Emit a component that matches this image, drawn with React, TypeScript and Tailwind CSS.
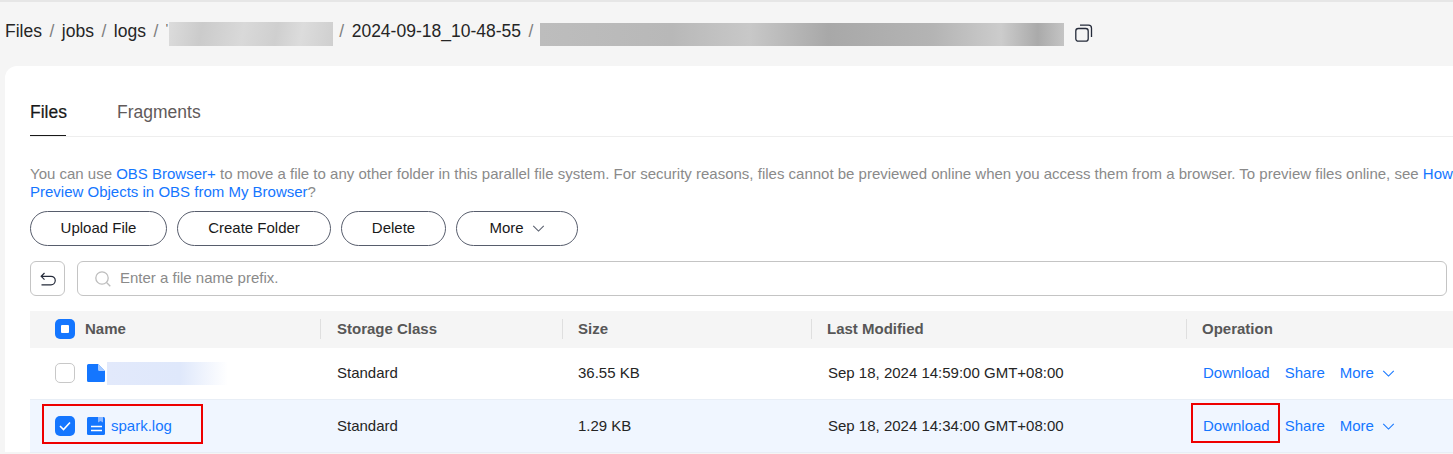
import type { ReactNode } from "react";

const font = "font-['Liberation_Sans',Arial,sans-serif]";

function Chevron({ className }: { className: string }) {
    return (
        <svg viewBox="0 0 14 8" fill="none" stroke="currentColor" strokeWidth="1.2" className={className}>
            <path d="M1 1l6 6 6-6" />
        </svg>
    );
}

function Pill({ width, children }: { width: string; children: ReactNode }) {
    return (
        <button className={`h-[35px] ${width} flex items-center justify-center gap-[8px] rounded-full border border-[#575d6c] bg-white text-[15px] text-[#191919]`}>
            {children}
        </button>
    );
}

function Sep({ className = "" }: { className?: string }) {
    return <span className={`text-[#7f7f7f] ${className}`}>/</span>;
}

function HeaderCell({ children }: { children: ReactNode }) {
    return (
        <div className="-ml-[1px] flex h-[20px] items-center border-l border-[#dfdfdf] pl-[15px] text-[15px] font-bold text-[#575757]">
            {children}
        </div>
    );
}

function Actions() {
    return (
        <div className="flex items-center text-[15px] text-[#1476ff]">
            <span>Download</span>
            <span className="ml-[15px]">Share</span>
            <span className="ml-[15px]">More</span>
            <Chevron className="ml-[8px] h-[7px] w-[13px]" />
        </div>
    );
}

export default function App() {
    return (
        <div className={`${font} h-[454px] w-full overflow-hidden border-t-2 border-[#e6e6e6] bg-[#f5f5f5]`}>
            <div className="flex h-[64px] items-center gap-[7.5px] pb-[6px] pl-[5px] text-[17.5px] text-[#252525]">
                <span>Files</span>
                <Sep />
                <span>jobs</span>
                <Sep />
                <span>logs</span>
                <Sep />
                <div className="mt-[6px] flex items-start">
                    <span className="mt-[1px] w-[3px] text-xs leading-none text-[#555555]">'</span>
                    <div className="h-[24px] w-[164px] bg-[linear-gradient(100deg,#dcdcdc,#cbcbcb_20%,#d9d9d9_45%,#cfcfcf_65%,#dcdcdc_80%,#cfcfcf)]" />
                </div>
                <Sep className="-ml-[1px]" />
                <span>2024-09-18_10-48-55</span>
                <Sep />
                <div className="-ml-[1px] mt-[6px] h-[23px] w-[524px] bg-[linear-gradient(90deg,#bdbdbd,#b8b8b8_25%,#c8c8c8_40%,#a8a8a8_55%,#b4b4b4_75%,#cccccc_88%,#aaaaaa_95%,#c4c4c4)]" />
                <svg viewBox="0 0 18 18" fill="none" stroke="#252b3a" strokeWidth="1.3" className="ml-[3.5px] mt-[4px] h-[18px] w-[18px]">
                    <rect x="0.8" y="4.5" width="12.4" height="12.7" rx="2.5" />
                    <path d="M5 1.2h8.5a3 3 0 0 1 3 3V13" />
                </svg>
            </div>

            <div className="relative ml-[5px] h-[386px] rounded-tl-xl bg-white pl-[25px]">
                <div className="flex h-[71px] items-end border-b border-[#eeeeee] text-[17.5px]">
                    <div className="w-[36px] border-b-[1.5px] border-[#191919] pb-[13px] leading-[20px] text-[#191919] [-webkit-text-stroke:0.2px]">Files</div>
                    <div className="ml-[51px] pb-[14px] leading-[20px] text-[#615a5a]">Fragments</div>
                </div>

                <p className="mt-[28px] w-[1423px] text-[15px] leading-[18px] text-[#8a8a8a]">
                    You can use <span className="text-[#1476ff]">OBS Browser+</span> to move a file to any other folder in this parallel file system. For security reasons, files cannot be previewed online when you access them from a browser. To preview files online, see <span className="text-[#1476ff]">How Preview Objects in OBS from My Browser</span>?
                </p>

                <div className="mt-[10px] flex gap-[10px]">
                    <Pill width="w-[137px]">Upload File</Pill>
                    <Pill width="w-[154px]">Create Folder</Pill>
                    <Pill width="w-[105px]">Delete</Pill>
                    <Pill width="w-[122px]">
                        More
                        <Chevron className="h-[7px] w-[13px] text-[#575d6c]" />
                    </Pill>
                </div>

                <div className="mr-[6px] mt-[15px] flex gap-[12px]">
                    <button className="flex h-[35px] w-[35px] items-center justify-center rounded-md border border-[#c4c4c4]">
                        <svg viewBox="0 0 16 14" fill="none" stroke="#252b3a" strokeWidth="1.2" className="h-[14px] w-[16px]">
                            <path d="M4.5 1L1.2 4.3 4.5 7.6M1.2 4.3H11a4 4 0 0 1 0 8.5H1.5" />
                        </svg>
                    </button>
                    <div className="flex h-[35px] flex-1 items-center rounded-md border border-[#c4c4c4] pl-[17px] text-[15px] text-[#8a8a8a]">
                        <svg viewBox="0 0 16 16" fill="none" stroke="#bdbdbd" strokeWidth="1.3" className="mr-[9px] h-[16px] w-[16px]">
                            <circle cx="7" cy="7" r="6.2" />
                            <path d="M11.5 11.5L15.3 15.3" />
                        </svg>
                        Enter a file name prefix.
                    </div>
                </div>

                <div className="mt-[15px] text-[15px] text-[#252525]">
                    <div className="grid h-[37px] grid-cols-[291px_242px_249px_375px_1fr] items-center bg-[#f5f5f5] pb-[1px]">
                        <div className="flex items-center pl-[25px]">
                            <span className="flex h-[20px] w-[20px] items-center justify-center rounded-[5px] bg-[#1476ff]">
                                <span className="h-[8px] w-[8px] rounded-[1px] bg-white" />
                            </span>
                            <span className="ml-[10px] text-[15px] font-bold text-[#575757]">Name</span>
                        </div>
                        <HeaderCell><span className="pl-[1px]">Storage Class</span></HeaderCell>
                        <HeaderCell>Size</HeaderCell>
                        <HeaderCell>Last Modified</HeaderCell>
                        <HeaderCell>Operation</HeaderCell>
                    </div>

                    <div className="grid h-[52px] grid-cols-[291px_242px_249px_375px_1fr] items-center border-b border-[#e8eef6] bg-white pb-[1px]">
                        <div className="flex items-center pl-[25px]">
                            <span className="h-[20px] w-[20px] rounded-[5px] border-[1.5px] border-[#c8c8c8] bg-white" />
                            <svg viewBox="0 0 18 18" className="ml-[12px] h-[18px] w-[18px]">
                                <path fill="#1476ff" d="M1.5 0H11L18 7V16.5a1.5 1.5 0 0 1-1.5 1.5H1.5A1.5 1.5 0 0 1 0 16.5V1.5A1.5 1.5 0 0 1 1.5 0z" />
                                <path fill="#a9cbff" d="M11 0L18 7H12.5A1.5 1.5 0 0 1 11 5.5z" />
                            </svg>
                            <div className="ml-[2px] h-[23px] w-[121px] bg-[linear-gradient(90deg,#e2e9fb,#dfe8fb_60%,#ffffff)]" />
                        </div>
                        <div className="pl-[16px]">Standard</div>
                        <div className="pl-[15px]">36.55 KB</div>
                        <div className="pl-[16px]">Sep 18, 2024 14:59:00 GMT+08:00</div>
                        <div className="pl-[16px]"><Actions /></div>
                    </div>

                    <div className="grid h-[53px] grid-cols-[291px_242px_249px_375px_1fr] items-center border-b border-[#e8eef6] bg-[#f0f6ff]">
                        <div className="flex items-center pl-[25px]">
                            <span className="flex h-[20px] w-[20px] items-center justify-center rounded-[5px] bg-[#1476ff]">
                                <svg viewBox="0 0 12 10" fill="none" stroke="white" strokeWidth="1.6" className="h-[10px] w-[12px]">
                                    <path d="M1 5l3.5 3.5L11 1.5" />
                                </svg>
                            </span>
                            <svg viewBox="0 0 18 18" className="ml-[12px] h-[18px] w-[18px]">
                                <rect fill="#1476ff" width="18" height="18" rx="1.5" />
                                <path fill="#8db8ff" d="M11 0H16V5.5L13.5 4L11 5.5z" />
                                <path stroke="white" strokeWidth="1.6" d="M4 9.5H15M4 13.5H15" />
                            </svg>
                            <span className="ml-[6px] text-[#1476ff]">spark.log</span>
                        </div>
                        <div className="pl-[16px]">Standard</div>
                        <div className="pl-[15px]">1.29 KB</div>
                        <div className="pl-[16px]">Sep 18, 2024 14:34:00 GMT+08:00</div>
                        <div className="pl-[16px]"><Actions /></div>
                    </div>
                </div>

                {/* red callouts drawn over the table */}
                <div className="absolute left-[37px] top-[338px] h-[40px] w-[161px] border-2 border-[#ee0000]" />
                <div className="absolute left-[1186px] top-[337px] h-[40px] w-[89px] border-2 border-[#ee0000]" />
            </div>
        </div>
    );
}
